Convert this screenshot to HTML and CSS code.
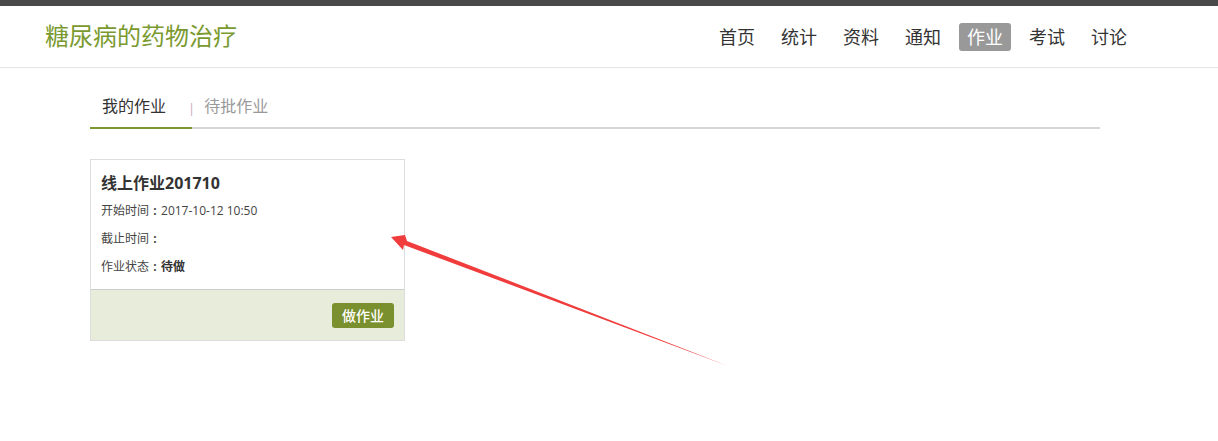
FILE: index.html
```html
<!DOCTYPE html>
<html lang="zh-CN">
<head>
    <meta charset="UTF-8">
    <title>糖尿病的药物治疗</title>
    <link rel="stylesheet" href="styles.css">
</head>
<body>
<div class="topbar"></div>
<div class="header">
    <div class="logo">糖尿病的药物治疗</div>
    <ul class="nav">
        <li>首页</li>
        <li>统计</li>
        <li>资料</li>
        <li>通知</li>
        <li class="active">作业</li>
        <li>考试</li>
        <li>讨论</li>
    </ul>
</div>

<div class="main">
    <div class="tabs">
        <span class="tab current">我的作业</span>
        <span class="sep">|</span>
        <span class="tab">待批作业</span>
    </div>

    <div class="card">
        <div class="card-body">
            <h3 class="card-title">线上作业201710</h3>
            <p>开始时间<span class="colon">:</span>2017-10-12 10:50</p>
            <p>截止时间<span class="colon">:</span></p>
            <p>作业状态<span class="colon">:</span><b>待做</b></p>
        </div>
        <div class="card-foot">
            <span class="btn">做作业</span>
        </div>
    </div>
</div>

<!-- annotation arrow -->
<svg class="arrow" width="1218" height="441" viewBox="0 0 1218 441">
    <polygon fill="#f03c3c" points="391,237 405,235 407,241 728,366 404,245 403,250"/>
</svg>
</body>
</html>
```

FILE: styles.css
```css
* {
    box-sizing: border-box;
}

body {
    margin: 0;
    background: #fff;
    font-family: "Open Sans", "Noto Sans CJK SC", sans-serif;
    color: #333;
}

.topbar {
    height: 6px;
    background: #4a4a4a;
}

.header {
    height: 62px;
    border-bottom: 1px solid #e5e5e5;
    display: flex;
    align-items: center;
    justify-content: space-between;
    padding: 0 83px 0 45px;
}

.logo {
    font-size: 24px;
    color: #7a9a2f;
    line-height: 30px;
    margin-top: -2px;
}

.nav {
    list-style: none;
    margin: 0;
    padding: 0;
    display: flex;
    gap: 10px;
}

.nav li {
    font-size: 18px;
    line-height: 28px;
    padding: 0 8px;
    color: #333;
    border-radius: 3px;
}

.nav li.active {
    background: #999;
    color: #fff;
}

.main {
    margin-left: 90px;
    width: 1010px;
    padding-top: 23px;
}

.tabs {
    display: flex;
    align-items: flex-start;
    border-bottom: 2px solid #d6d6d6;
    height: 38px;
}

.tab {
    font-size: 16px;
    color: #999;
    line-height: 30px;
}

.tab.current {
    color: #333;
    padding: 0 26px 0 12px;
    border-bottom: 2px solid #7a9a2f;
    height: 38px;
}

.sep {
    color: #c9a8c0;
    font-size: 13px;
    line-height: 30px;
    margin: 2px 9px 0 -4px;
}

.card {
    margin-top: 30px;
    width: 315px;
    border: 1px solid #ddd;
}

.card-body {
    padding: 13px 10px 8px;
}

.card-title {
    margin: 0 0 4px;
    height: 20px;
    font-size: 16px;
    font-weight: bold;
    line-height: 20px;
    color: #333;
}

.card-body p {
    margin: 0;
    height: 28px;
    font-size: 12px;
    line-height: 28px;
    color: #444;
}

.colon {
    display: inline-block;
    width: 12px;
    text-align: center;
    font-weight: bold;
}

.card-body b {
    color: #333;
}

.card-foot {
    background: #e8ecda;
    border-top: 1px solid #ccc;
    height: 51px;
    display: flex;
    align-items: center;
    justify-content: flex-end;
    padding: 0 10px 0 0;
}

.btn {
    background: #7a8f2e;
    color: #fff;
    font-size: 14px;
    font-weight: 500;
    line-height: 25px;
    padding: 0 10px;
    border-radius: 3px;
}

.arrow {
    position: absolute;
    left: 0;
    top: 0;
    pointer-events: none;
}
```
